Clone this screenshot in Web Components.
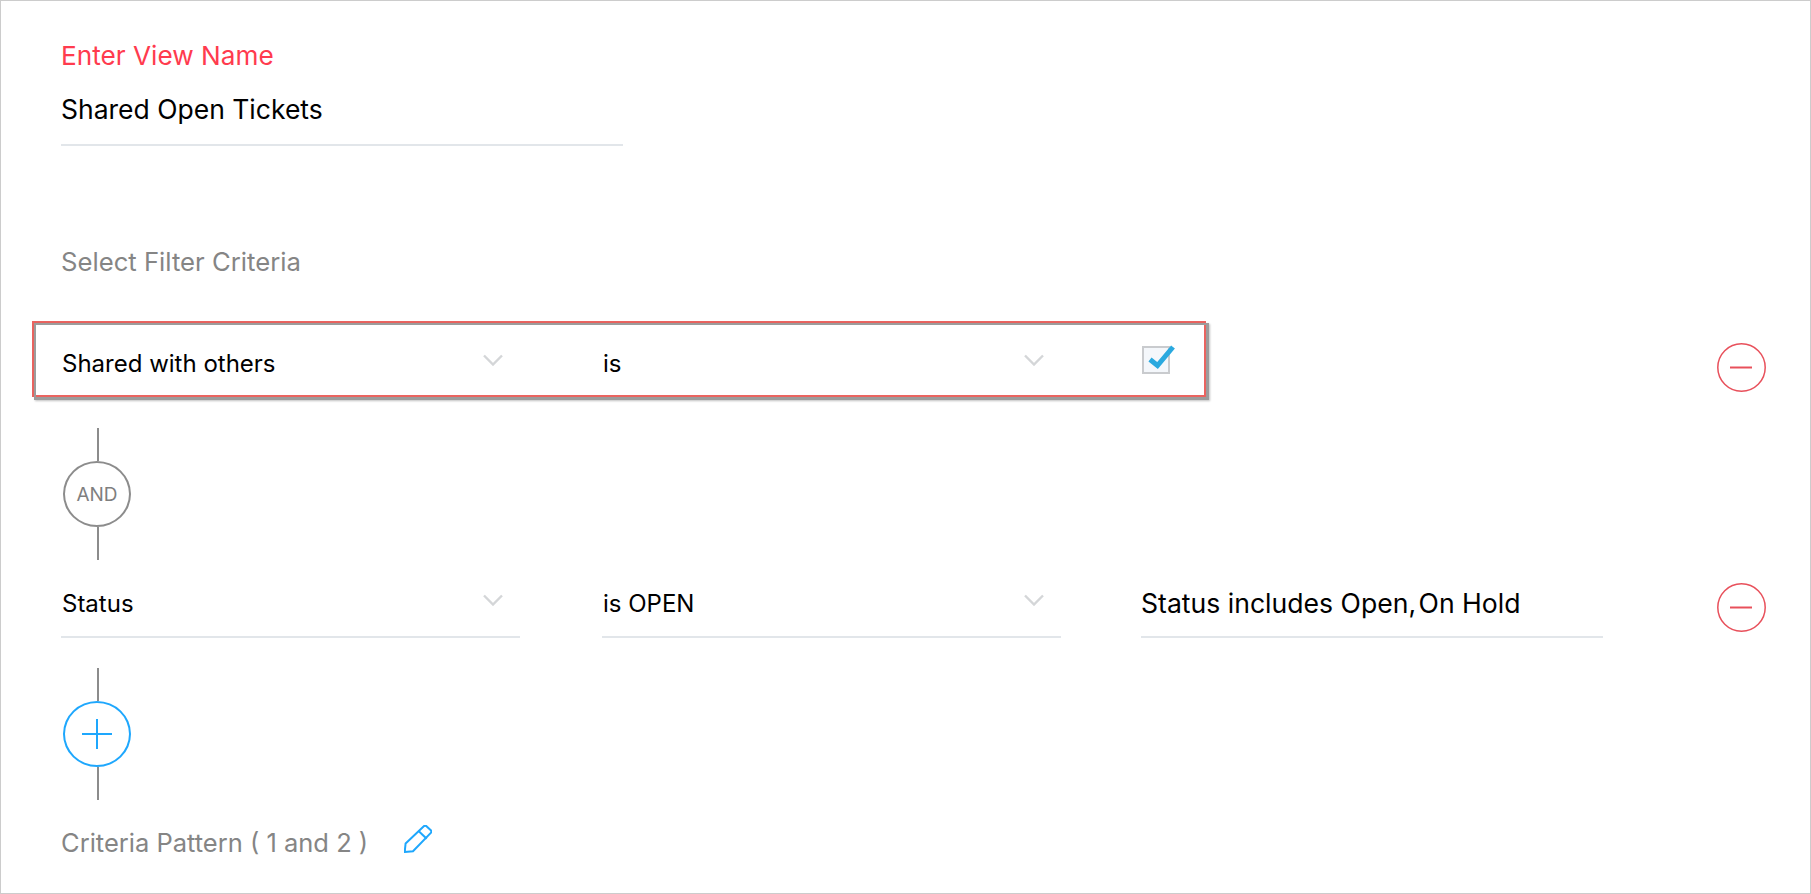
<!DOCTYPE html>
<html lang="en">
  <head>
    <meta charset="UTF-8" />
    <title>Shared Open Tickets</title>
    <style>
      html, body { margin: 0; background: #fff; }
      body { font-family: Inter, "Liberation Sans", sans-serif; }
    </style>
  </head>
  <body>
    <view-form>
      <text-field label="Enter View Name" value="Shared Open Tickets"></text-field>
      <section-label>Select Filter Criteria</section-label>

      <criteria-row highlight>
        <select-field>Shared with others</select-field>
        <select-field>is</select-field>
        <check-box slot="value"></check-box>
      </criteria-row>
      <connector-node>AND</connector-node>
      <criteria-row>
        <select-field>Status</select-field>
        <select-field>is OPEN</select-field>
        <value-field slot="value">Status includes Open<span style="word-spacing: -5px">, </span>On Hold</value-field>
      </criteria-row>
      <connector-node add></connector-node>

      <pattern-line>Criteria Pattern ( 1 and 2 )</pattern-line>
    </view-form>

    <script>
      const chevron = `<svg width="20" height="12" viewBox="0 0 20 12"><path d="M1 1.5l9 9 9-9" fill="none" stroke="#d4d6d8" stroke-width="2.4"/></svg>`;

      class ViewForm extends HTMLElement {
        constructor() {
          super();
          this.attachShadow({ mode: "open" }).innerHTML = `
            <style>
              :host {
                display: block;
                box-sizing: border-box;
                width: 1811px;
                height: 894px;
                border: 1px solid #ccc;
                padding: 40px 0 0 60px;
                overflow: hidden;
              }
            </style>
            <slot></slot>`;
        }
      }

      class TextField extends HTMLElement {
        constructor() {
          super();
          this.attachShadow({ mode: "open" }).innerHTML = `
            <style>
              :host { display: block; width: 562px; height: 103px; border-bottom: 2px solid #e2e6ea; }
              .label { font-size: 26.2px; line-height: 30px; color: #ff3b4e; }
              .value { font-size: 26.5px; line-height: 32px; color: #000; margin-top: 22px; }
            </style>
            <div class="label">${this.getAttribute("label")}</div>
            <div class="value">${this.getAttribute("value")}</div>`;
        }
      }

      class SectionLabel extends HTMLElement {
        constructor() {
          super();
          this.attachShadow({ mode: "open" }).innerHTML = `
            <style>
              :host { display: block; font-size: 25.7px; line-height: 30px; color: #858585; margin: 101px 0 71px; }
            </style>
            <slot></slot>`;
        }
      }

      class CriteriaRow extends HTMLElement {
        constructor() {
          super();
          this.attachShadow({ mode: "open" }).innerHTML = `
            <style>
              :host {
                display: grid;
                grid-template-columns: 541px 539px 576px 49px;
                position: relative;
                height: 50px;
              }
              .remove { margin-top: -5px; width: 49px; height: 49px; }
              .mark { display: none; }
              :host([highlight]) .mark {
                display: block;
                position: absolute;
                left: -29px;
                top: -27px;
                width: 1174px;
                height: 76px;
                box-sizing: border-box;
                border: 2px solid #ea6460;
              }
              .mark::before {
                content: "";
                position: absolute;
                inset: 0 -5px -5px 0;
                box-sizing: border-box;
                border: solid #9c9c9c;
                border-width: 2px 3px 3px 2px;
                box-shadow: 1px 1px 2px rgba(0, 0, 0, .25);
              }
            </style>
            <slot></slot>
            <slot name="value"></slot>
            <svg class="remove" viewBox="0 0 49 49">
              <circle cx="24.5" cy="24.5" r="23.7" fill="none" stroke="#e8505b" stroke-width="1.5"/>
              <path d="M13 24.5h22" stroke="#e8505b" stroke-width="2"/>
            </svg>
            <div class="mark"></div>`;
        }
      }

      class SelectField extends HTMLElement {
        constructor() {
          super();
          this.attachShadow({ mode: "open" }).innerHTML = `
            <style>
              :host {
                display: flex;
                justify-content: space-between;
                box-sizing: border-box;
                width: 459px;
                height: 50px;
                padding: 0 17px 0 1px;
                border-bottom: 2px solid #e2e6ea;
                font-size: 24px;
                line-height: 31px;
                color: #000;
              }
              svg { margin-top: 6px; }
            </style>
            <span><slot></slot></span>
            ${chevron}`;
        }
      }

      class ValueField extends HTMLElement {
        constructor() {
          super();
          this.attachShadow({ mode: "open" }).innerHTML = `
            <style>
              :host {
                display: block;
                box-sizing: border-box;
                width: 462px;
                height: 50px;
                border-bottom: 2px solid #e2e6ea;
                font-size: 26.6px;
                line-height: 30px;
                color: #000;
              }
            </style>
            <slot></slot>`;
        }
      }

      class CheckBox extends HTMLElement {
        constructor() {
          super();
          this.attachShadow({ mode: "open" }).innerHTML = `
            <style>
              :host { display: block; height: 50px; }
              svg { display: block; margin: -4px 0 0 1px; }
            </style>
            <svg width="34" height="30" viewBox="0 0 34 30">
              <rect x="1" y="3" width="26" height="26" fill="#f4f7fb" stroke="#c9cbce" stroke-width="2"/>
              <path d="M8 15.5l7.5 6L31 3" fill="none" stroke="#2aa9df" stroke-width="5"/>
            </svg>`;
        }
      }

      class ConnectorNode extends HTMLElement {
        constructor() {
          super();
          const add = this.hasAttribute("add");
          const color = add ? "#1ea7fd" : "#8c8c8c";
          this.attachShadow({ mode: "open" }).innerHTML = `
            <style>
              :host {
                display: flex;
                flex-direction: column;
                align-items: center;
                width: 68px;
                margin: 30px 0 28px 2px;
              }
              .line { width: 2px; height: 33px; margin-left: 2px; background: #8c8c8c; }
              .node {
                display: flex;
                align-items: center;
                justify-content: center;
                box-sizing: border-box;
                width: 68px;
                height: 66px;
                border: 2px solid ${color};
                border-radius: 50%;
                font-size: 19px;
                color: #7f7f7f;
              }
            </style>
            <div class="line"></div>
            <div class="node">
              ${add
                ? `<svg width="32" height="32" viewBox="0 0 32 32"><path d="M16 1v30M1 16h30" stroke="${color}" stroke-width="2"/></svg>`
                : `<slot></slot>`}
            </div>
            <div class="line"></div>`;
        }
      }

      class PatternLine extends HTMLElement {
        constructor() {
          super();
          this.attachShadow({ mode: "open" }).innerHTML = `
            <style>
              :host {
                display: flex;
                align-items: center;
                gap: 36px;
                font-size: 25.5px;
                line-height: 30px;
                color: #858585;
                margin-top: 6px;
              }
              svg { margin-top: -8px; }
            </style>
            <span><slot></slot></span>
            <svg width="28" height="28" viewBox="0 0 28 28" fill="none" stroke="#1ea7fd" stroke-width="2">
              <path d="M.7 27l.9-8.5L19.8 1.2q1.4-1.2 2.7 0l4.3 4.1q1.2 1.3 0 2.6L9 26.2z"/>
              <path d="M14.3 5.8l8.4 8"/>
            </svg>`;
        }
      }

      customElements.define("view-form", ViewForm);
      customElements.define("text-field", TextField);
      customElements.define("section-label", SectionLabel);
      customElements.define("criteria-row", CriteriaRow);
      customElements.define("select-field", SelectField);
      customElements.define("value-field", ValueField);
      customElements.define("check-box", CheckBox);
      customElements.define("connector-node", ConnectorNode);
      customElements.define("pattern-line", PatternLine);
    </script>
  </body>
</html>
